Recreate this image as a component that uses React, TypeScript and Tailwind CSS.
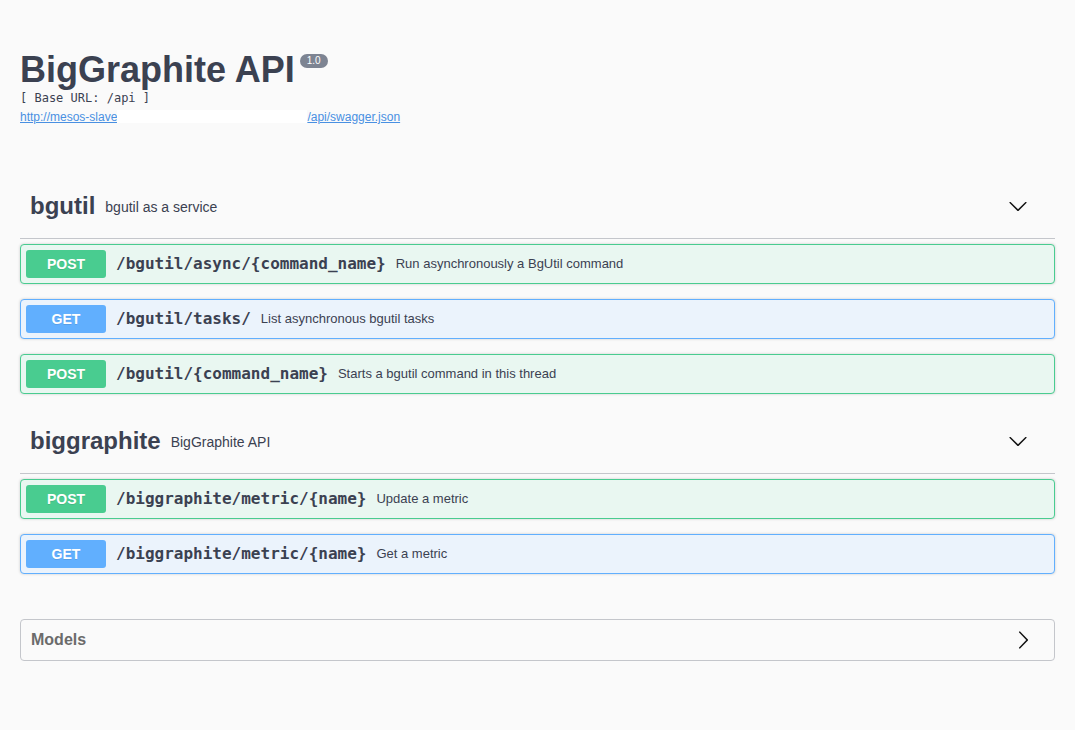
import React from 'react'

type Op = { method: 'POST' | 'GET'; path: string; summary: string }

const tags: { name: string; description: string; ops: Op[] }[] = [
  {
    name: 'bgutil',
    description: 'bgutil as a service',
    ops: [
      { method: 'POST', path: '/bgutil/async/{command_name}', summary: 'Run asynchronously a BgUtil command' },
      { method: 'GET', path: '/bgutil/tasks/', summary: 'List asynchronous bgutil tasks' },
      { method: 'POST', path: '/bgutil/{command_name}', summary: 'Starts a bgutil command in this thread' },
    ],
  },
  {
    name: 'biggraphite',
    description: 'BigGraphite API',
    ops: [
      { method: 'POST', path: '/biggraphite/metric/{name}', summary: 'Update a metric' },
      { method: 'GET', path: '/biggraphite/metric/{name}', summary: 'Get a metric' },
    ],
  },
]

const sans = "font-['Liberation_Sans',Arial,sans-serif]"
const mono = "font-['DejaVu_Sans_Mono',monospace]"

function ChevronDown() {
  return (
    <svg width="20" height="20" viewBox="0 0 20 20" className="fill-[#111]">
      <path d="M17.418 6.109c.272-.268.709-.268.979 0s.271.701 0 .969l-7.908 7.83c-.27.268-.707.268-.979 0l-7.908-7.83c-.27-.268-.27-.701 0-.969.271-.268.709-.268.979 0L10 13.25l7.418-7.141z" />
    </svg>
  )
}

function ChevronRight() {
  return (
    <svg width="20" height="20" viewBox="0 0 20 20" className="fill-[#111]">
      <path d="M13.25 10L6.109 2.58c-.268-.27-.268-.707 0-.979.268-.27.701-.27.969 0l7.83 7.908c.268.271.268.709 0 .979l-7.83 7.908c-.268.271-.701.27-.969 0-.268-.269-.268-.707 0-.979L13.25 10z" />
    </svg>
  )
}

function OpBlock({ op }: { op: Op }) {
  const post = op.method === 'POST'
  return (
    <div
      className={
        'mb-[15px] rounded-[4px] border shadow-[0_0_3px_rgba(0,0,0,0.19)] ' +
        (post ? 'border-[#49cc90] bg-[#e9f7f1]' : 'border-[#61affe] bg-[#ebf3fc]')
      }
    >
      <div className="flex items-center p-[5px]">
        <span
          className={
            'flex h-[28px] min-w-[80px] items-center justify-center rounded-[3px] text-[14px] font-bold text-white [text-shadow:0_1px_0_rgba(0,0,0,0.1)] ' +
            sans +
            (post ? ' bg-[#49cc90]' : ' bg-[#61affe]')
          }
        >
          {op.method}
        </span>
        <span className={'px-[10px] text-[16px] font-bold text-[#3b4151] ' + mono}>{op.path}</span>
        <span className={'flex-1 text-[13px] text-[#3b4151] ' + sans}>{op.summary}</span>
      </div>
    </div>
  )
}

export default function App() {
  return (
    <div className={'min-h-screen bg-[#fafafa] px-[20px] text-[#3b4151] ' + sans}>
      {/* Info */}
      <div className="pt-[49px]">
        <div className="flex items-start">
          <h2 className="text-[36px] font-bold leading-[41px] text-[#3b4151]">BigGraphite API</h2>
          <span className="ml-[5px] mt-[5px] rounded-[57px] bg-[#7d8492] px-[7px] py-[1px] text-[10px] leading-[12px] text-white">
            1.0
          </span>
        </div>
        <div className={'mt-[1px] text-[12px] leading-[15px] text-[#3b4151] ' + mono}>[ Base URL: /api ]</div>
        <div className="mt-[2px] text-[12px] leading-[15px]">
          <span className="text-[#4990e2] underline">http://mesos-slave</span>
          <span className="inline-block h-[13px] w-[190px] translate-y-[2px] bg-white" />
          <span className="text-[#4990e2] underline">/api/swagger.json</span>
        </div>
      </div>

      {/* Tags */}
      <div className="mt-[49px]">
        {tags.map((tag) => (
          <div key={tag.name}>
            <div className="mb-[5px] flex h-[65px] items-center border-b border-[#c4c6cb] pl-[10px] pr-[27px]">
              <span className="text-[24px] font-bold text-[#3b4151]">{tag.name}</span>
              <span className="flex-1 px-[10px] pt-[2px] text-[14px] text-[#3b4151]">{tag.description}</span>
              <ChevronDown />
            </div>
            {tag.ops.map((op) => (
              <OpBlock key={op.method + op.path} op={op} />
            ))}
          </div>
        ))}
      </div>

      {/* Models */}
      <div className="mt-[45px] flex h-[42px] items-center rounded-[4px] border border-[#c4c6cb] pl-[10px] pr-[21px]">
        <span className="flex-1 text-[16px] font-bold text-[#6b6b6b]">Models</span>
        <ChevronRight />
      </div>
    </div>
  )
}
